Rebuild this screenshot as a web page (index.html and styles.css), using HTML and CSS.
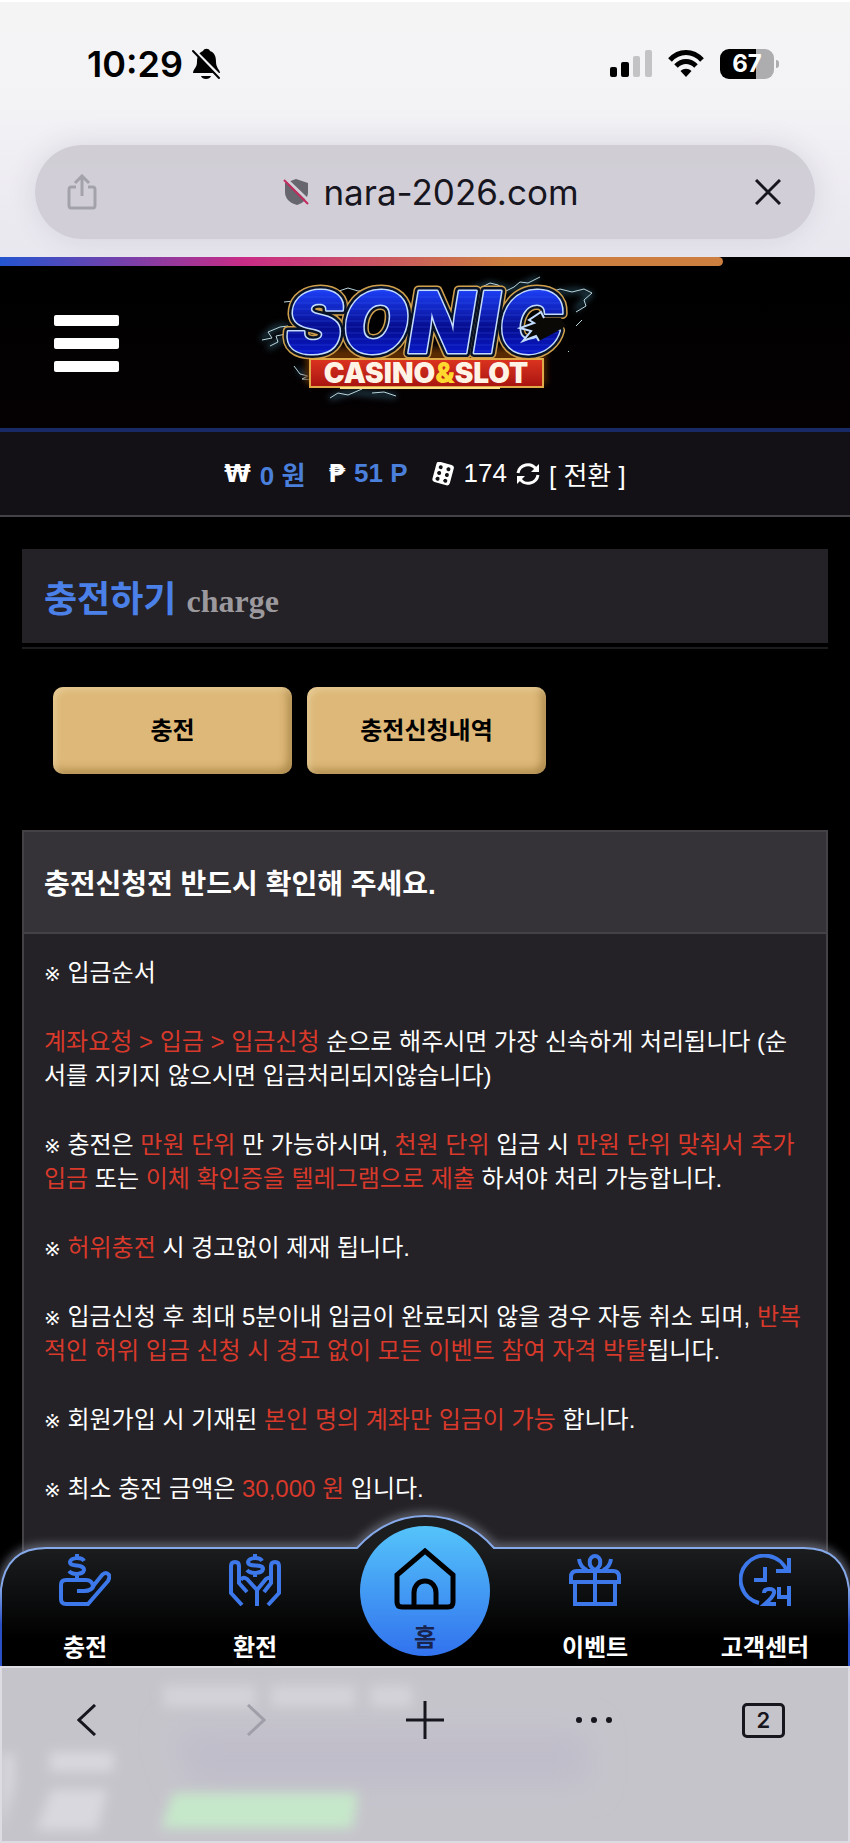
FILE: index.html
```html
<!DOCTYPE html>
<html lang="ko">
<head>
    <meta charset="UTF-8">
    <meta name="viewport" content="width=device-width, initial-scale=1.0">
    <title>충전하기</title>
    <link rel="stylesheet" href="styles.css">
</head>
<body>
    <div class="browser-top">
        <div class="status-bar">
            <div class="status-left">
                <span class="time">10:29</span>
                <svg width="30" height="32" viewBox="0 0 30 32">
                    <path d="M2 25C2 21 6 20 6 14C6 7 9 4 12 3C13 0 18 0 19 3C24 5 25 9 25 14C25 20 29 22 29 25Z"/>
                    <path d="M10 28H20C19 32 11 32 10 28Z"/>
                    <path d="M4 3L30 29" stroke="#f4f3f6" stroke-width="3"/>
                    <path d="M2 3L28 30" stroke="#000" stroke-width="2" stroke-linecap="round"/>
                </svg>
            </div>
            <div class="status-right">
                <svg width="42" height="28" viewBox="0 0 42 28">
                    <rect x="0" y="17" width="7" height="10" rx="2"/>
                    <rect x="11" y="12" width="8" height="15" rx="2"/>
                    <rect x="23" y="6" width="7" height="21" rx="2" fill="#c3c2c5"/>
                    <rect x="35" y="0" width="7" height="27" rx="2" fill="#c3c2c5"/>
                </svg>
                <svg width="36" height="27" viewBox="0 0 36 27" fill="none" stroke="#000" stroke-width="5">
                    <path d="M2 10C11 0 25 0 34 10"/>
                    <path d="M8 16C14 10 22 10 28 16"/>
                    <path d="M18 27L12.500 21C16 18 20 18 23.500 21Z" fill="#000" stroke="none"/>
                </svg>
                <div class="battery"><span>67</span></div>
            </div>
        </div>
        <div class="address-bar">
            <button class="icon-btn" aria-label="공유">
                <svg width="30" height="36" viewBox="0 0 30 36" fill="none" stroke="#a3a1aa" stroke-width="3">
                    <path d="M9 13H4Q2 13 2 16V31Q2 34 4 34H26Q28 34 28 31V16Q28 13 26 13H21M15 22V3M8 9L15 2L22 9"/>
                </svg>
            </button>
            <div class="address">
                <svg width="27" height="28" viewBox="0 0 27 28">
                    <path d="M2 5L13 1L25 5V14C25 20 21 25 14 27C6 25 2 20 2 14Z" fill="#67656e"/>
                    <path d="M3 1L27 24" stroke="#d1ced7" stroke-width="3"/>
                    <path d="M1 2L25 26" stroke="#c42a5c" stroke-width="2"/>
                </svg>
                <span>nara-2026.com</span>
            </div>
            <button class="icon-btn" aria-label="중지">
                <svg width="26" height="26" viewBox="0 0 26 26" stroke="#17151d" stroke-width="3">
                    <path d="M1 1L25 25M25 1L1 25"/>
                </svg>
            </button>
        </div>
    </div>

    <div class="site">
        <div class="progress"><div class="progress-fill"></div></div>

        <header class="header">
            <button class="menu-btn" aria-label="메뉴"><i></i><i></i><i></i></button>
            <a class="logo" href="#">
                <svg width="370" height="150" viewBox="-10 0 370 150">
                    <defs>
                        <linearGradient id="logoBlue" x1="0" y1="0" x2="0" y2="1">
                            <stop offset="0.200" stop-color="#1b3cf0"/>
                            <stop offset="0.550" stop-color="#050c8c"/>
                            <stop offset="0.900" stop-color="#0a1ee0"/>
                        </linearGradient>
                        <linearGradient id="logoRed" x1="0" y1="0" x2="0" y2="1">
                            <stop offset="0" stop-color="#dc3420"/>
                            <stop offset="1" stop-color="#a81410"/>
                        </linearGradient>
                        <filter id="soft" x="-20%" y="-20%" width="140%" height="140%"><feGaussianBlur stdDeviation="3"/></filter>
                        <pattern id="scan" width="8" height="6" patternUnits="userSpaceOnUse"><path d="M0 1H8" stroke="#3c63ff" stroke-opacity="0.300"/></pattern>
                    </defs>
                    <!-- lightning -->
                    <g fill="none" stroke="#3f7d96" stroke-opacity="0.600" stroke-width="4" filter="url(#soft)">
                        <path d="M12 74L24 62L38 60M18 82L34 72M48 104L62 112M80 132L100 126L122 128L146 130M210 28L240 18L262 24L288 12M300 28L326 24L340 28L326 44"/>
                    </g>
                    <g fill="none" stroke="#b9d6de" stroke-width="1">
                        <path d="M12 74L22 72L18 66L30 61L38 60M20 80L28 76L26 70L36 68M34 36L44 35L50 40M56 26L60 30M86 26L98 22L108 25L120 24"/>
                        <path d="M44 100L50 108L58 110L52 113L64 114M80 132L88 127L98 129L112 123M122 127L134 126L146 130"/>
                        <path d="M204 32L216 25L230 22L240 17L248 19L256 25L264 21L270 16L278 17L290 11"/>
                        <path d="M298 27L310 23L322 26L334 23L342 27L334 34L336 40L326 46M332 54L326 60M314 66L306 72M318 85L319 86"/>
                    </g>
                    <rect x="56" y="82" width="240" height="36" fill="#5a2c05" filter="url(#soft)"/>
                    <g class="logo-main">
                        <text x="36" y="87" stroke="#d0a04c" stroke-width="11">SONIC</text>
                        <text x="36" y="87" stroke="#071226" stroke-width="8">SONIC</text>
                        <text x="36" y="87" stroke="#c3dcff" stroke-width="3">SONIC</text>
                        <text x="36" y="87" fill="url(#logoBlue)">SONIC</text>
                        <text x="36" y="87" fill="url(#scan)">SONIC</text>
                    </g>
                    <!-- spikes cut out of the C -->
                    <path d="M311 52L294 52L291 46L279 54L284 57L270 62L281 65L273 75L286 70L289 75L304 67L316 60Z" fill="#0a0906"/>
                    <path d="M294 52L291 46L279 54L284 57L270 62L281 65L273 75L286 70L289 75" fill="none" stroke="#c3dcff" stroke-width="2"/>
                    <rect x="60" y="93" width="233" height="28" fill="url(#logoRed)" stroke="#e0aa48" stroke-width="2"/>
                    <path d="M90 122H250" stroke="#ffe08a" stroke-width="2"/>
                    <text class="logo-sub" x="176" y="117" text-anchor="middle">CASINO<tspan fill="#ffd92e">&amp;</tspan>SLOT</text>
                </svg>
            </a>
        </header>

        <div class="wallet">
            <span class="coin">₩</span>
            <b>0 원</b>
            <span class="coin peso">₱</span>
            <b>51 P</b>
            <svg class="dice" width="24" height="24" viewBox="0 0 24 24">
                <g transform="rotate(15 12 12)">
                    <rect x="3" y="1" width="18" height="21" rx="3" fill="#fff"/>
                    <g fill="#131115"><circle cx="8" cy="6" r="2"/><circle cx="16" cy="6" r="2"/><circle cx="8" cy="12" r="2"/><circle cx="16" cy="12" r="2"/><circle cx="8" cy="18" r="2"/><circle cx="16" cy="18" r="2"/></g>
                </g>
            </svg>
            <span>174</span>
            <svg width="24" height="24" viewBox="0 0 24 24" fill="none" stroke="#fff" stroke-width="3">
                <path d="M2 11A10 10 0 0 1 20 7M22 13A10 10 0 0 1 4 17"/>
                <path d="M23 2V10H15ZM1 22V14H9Z" fill="#fff" stroke="none"/>
            </svg>
            <a href="#">[ 전환 ]</a>
        </div>

        <main class="content">
            <h1 class="page-title">충전하기 <small>charge</small></h1>
            <div class="tabs">
                <button>충전</button>
                <button>충전신청내역</button>
            </div>
            <section class="notice">
                <h2>충전신청전 반드시 확인해 주세요.</h2>
                <div class="notice-body">
                    <p><i>※</i> 입금순서</p>
                    <p><em>계좌요청 &gt; 입금 &gt; 입금신청</em> 순으로 해주시면 가장 신속하게 처리됩니다 (순서를 지키지 않으시면 입금처리되지않습니다)</p>
                    <p><i>※</i> 충전은 <em>만원 단위</em> 만 가능하시며, <em>천원 단위</em> 입금 시 <em>만원 단위 맞춰서 추가입금</em> 또는 <em>이체 확인증을 텔레그램으로 제출</em> 하셔야 처리 가능합니다.</p>
                    <p><i>※</i> <em>허위충전</em> 시 경고없이 제재 됩니다.</p>
                    <p><i>※</i> 입금신청 후 최대 5분이내 입금이 완료되지 않을 경우 자동 취소 되며, <em>반복적인 허위 입금 신청 시 경고 없이 모든 이벤트 참여 자격 박탈</em>됩니다.</p>
                    <p><i>※</i> 회원가입 시 기재된 <em>본인 명의 계좌만 입금이 가능</em> 합니다.</p>
                    <p><i>※</i> 최소 충전 금액은 <em>30,000 원</em> 입니다.</p>
                </div>
            </section>
        </main>

        <nav class="bottom-nav">
            <svg class="nav-bg" viewBox="0 0 850 165" preserveAspectRatio="none">
                <defs>
                    <linearGradient id="navFill" x1="0" y1="0" x2="0" y2="1">
                        <stop offset="0.200" stop-color="#1b1d1f"/>
                        <stop offset="0.800" stop-color="#000"/>
                    </linearGradient>
                    <linearGradient id="navLine" x1="0" y1="0" x2="0" y2="1">
                        <stop offset="0.450" stop-color="#86a9ea"/>
                        <stop offset="0.700" stop-color="#2a4fc4"/>
                    </linearGradient>
                    <filter id="navGlow" x="-5%" y="-20%" width="110%" height="140%"><feGaussianBlur stdDeviation="5"/></filter>
                </defs>
                <path d="M1 170V88Q6 47 46 47H357Q386 15 425 15Q466 15 494 47H804Q844 47 849 88V170" fill="none" stroke="#7b8090" stroke-width="6" filter="url(#navGlow)"/>
                <path d="M1 170V88Q6 47 46 47H357Q386 15 425 15Q466 15 494 47H804Q844 47 849 88V170" fill="url(#navFill)" stroke="url(#navLine)" stroke-width="2"/>
            </svg>
            <a class="nav-item" href="#">
                <svg width="52" height="52" viewBox="0 0 52 52">
                    <path d="M25 7C23 3 12 3 11 8C11 14 25 9 25 16C24 21 13 21 10 17M18 0V4M18 20V25"/>
                    <path d="M18 37H25Q33 37 35 31L43 21Q47 17 50 21Q51 23 49 27L29 50H7Q2 50 2 45V31Q2 26 7 26H27Q33 26 34 32"/>
                </svg>
                <span>충전</span>
            </a>
            <a class="nav-item" href="#">
                <svg width="52" height="52" viewBox="0 0 52 52">
                    <path d="M33 7C31 3 20 3 19 8C19 14 34 9 34 15C33 20 21 20 18 16M26 0V4M26 19V23"/>
                    <path d="M28 52V36L18 25Q14 22 12 26M18 38L10 29V12Q10 8 6 8Q2 8 2 12V39L13 51M28 36L37 25Q41 22 42 26M35 38L42 29V12Q42 8 46 8Q50 8 50 12V39L39 51"/>
                </svg>
                <span>환전</span>
            </a>
            <a class="nav-item home" href="#">
                <svg width="62" height="62" viewBox="0 0 62 62">
                    <path d="M3 27L31 3L59 27V54Q59 59 54 59H8Q3 59 3 54ZM20 58V45C20 29 42 29 42 45V58"/>
                </svg>
                <span>홈</span>
            </a>
            <a class="nav-item" href="#">
                <svg width="52" height="52" viewBox="0 0 52 52">
                    <path d="M2 30V23Q2 17 8 17H44Q50 17 50 23V28H0M6 28V50H46V28M26 16V50M26 16C18 12 20 2 26 2C32 2 34 12 26 16M18 16Q11 13 10 5M34 16Q41 13 42 5"/>
                </svg>
                <span>이벤트</span>
            </a>
            <a class="nav-item" href="#">
                <svg width="52" height="52" viewBox="0 0 52 52">
                    <path d="M20 49A24 24 0 1 1 48 17M50 4V17H37M26 13V26H15"/>
                    <path d="M25 39Q25 35 30 35Q36 35 35 39Q34 43 26 50H37M40 33V43H50M50 32V52"/>
                </svg>
                <span>고객센터</span>
            </a>
        </nav>
    </div>

    <div class="browser-bottom">
        <svg class="haze" viewBox="0 0 850 177" preserveAspectRatio="none">
            <defs>
                <filter id="haze" x="-20%" y="-40%" width="140%" height="180%"><feGaussianBlur stdDeviation="6"/></filter>
                <filter id="hazeWide" x="-20%" y="-60%" width="140%" height="220%"><feGaussianBlur stdDeviation="16"/></filter>
            </defs>
            <path d="M170 64H590V120H190Z" fill="#c0bdca" filter="url(#hazeWide)"/>
            <g filter="url(#haze)">
                <path d="M162 18H255V40H162ZM270 18H355V40H270ZM370 18H412V40H370Z" fill="#d4d3d9"/>
                <path d="M0 88H12V120L0 165ZM48 86H112V106H48ZM50 124H106L96 166H34Z" fill="#d9d8df"/>
                <path d="M172 128H358L352 164H160Z" fill="#c6e8ca"/>
            </g>
        </svg>
        <div class="toolbar">
            <button aria-label="뒤로"><svg width="20" height="32" viewBox="0 0 20 32"><path d="M18 1L2 16L18 31"/></svg></button>
            <button class="off" aria-label="앞으로"><svg width="20" height="32" viewBox="0 0 20 32"><path d="M2 1L18 16L2 31"/></svg></button>
            <button aria-label="새 탭"><svg width="38" height="38" viewBox="0 0 38 38"><path d="M19 0V38M0 19H38"/></svg></button>
            <button aria-label="더 보기"><svg width="38" height="8" viewBox="0 0 38 8"><g fill="#17151d" stroke="none"><circle cx="4" cy="4" r="3"/><circle cx="19" cy="4" r="3"/><circle cx="34" cy="4" r="3"/></g></svg></button>
            <button aria-label="탭 2개"><span class="tab-count">2</span></button>
        </div>
    </div>
</body>
</html>
```

FILE: styles.css
```css
* {
    box-sizing: border-box;
}
body {
    margin: 0;
    min-height: 100vh;
    display: flex;
    flex-direction: column;
    background: #000;
    color: #fff;
    font-family: "Liberation Sans", "Noto Sans CJK KR", sans-serif;
    font-size: 24px;
}
button {
    border: none;
    background: none;
    padding: 0;
    font-family: inherit;
    cursor: pointer;
}
a {
    color: inherit;
    text-decoration: none;
}
svg {
    display: block;
    flex: none;
}

/* browser top */
.browser-top {
    height: 257px;
    padding: 0 35px;
    background: linear-gradient(#f5f4f5, #f3f2f5 40%, #e9e7ef);
    border-top: 2px solid #fff;
    color: #000;
    font-family: Inter, sans-serif;
}
.status-bar {
    height: 123px;
    padding: 0 36px 0 52px;
    display: flex;
    align-items: center;
    justify-content: space-between;
}
.status-left {
    display: flex;
    align-items: center;
    gap: 8px;
}
.time {
    font-size: 36px;
    font-weight: 600;
}
.status-right {
    display: flex;
    align-items: center;
    gap: 16px;
}
.battery {
    position: relative;
    width: 54px;
    height: 30px;
    margin-right: 5px;
    border-radius: 9px;
    background: linear-gradient(90deg, #000 67%, #adacae 67%);
    color: #fff;
    font-size: 24px;
    font-weight: 700;
    line-height: 30px;
    text-align: center;
}
.battery::after {
    content: "";
    position: absolute;
    right: -5px;
    top: 11px;
    width: 3px;
    height: 8px;
    border-radius: 0 4px 4px 0;
    background: #adacae;
}
.address-bar {
    height: 94px;
    margin-top: 20px;
    padding: 0 34px 0 32px;
    border-radius: 47px;
    background: linear-gradient(#d0ced3, #d1ced8 40%);
    box-shadow: 0 0 30px rgba(60, 50, 90, 0.12);
    display: flex;
    align-items: center;
    justify-content: space-between;
}
.address {
    display: flex;
    align-items: center;
    gap: 13px;
    padding-left: 10px;
    font-size: 35px;
    color: #17151d;
}

/* site */
.site {
    position: relative;
    flex: 1;
    display: flex;
    flex-direction: column;
    overflow: hidden;
}
.progress-fill {
    width: 85%;
    height: 9px;
    border-radius: 0 5px 5px 0;
    background: linear-gradient(90deg, #2355d0, #c92c86 34%, #cc7f3f 70%);
}
.header {
    height: 166px;
    padding: 0 54px;
    border-bottom: 4px solid #172a66;
    background: linear-gradient(#000, #050103);
    display: grid;
    grid-template-columns: 1fr auto 1fr;
}
.menu-btn {
    width: 65px;
    height: 57px;
    margin-top: 49px;
    display: flex;
    flex-direction: column;
    justify-content: space-between;
}
.menu-btn i {
    width: 100%;
    height: 11px;
    border-radius: 2px;
    background: #fff;
}
.logo-main {
    font: italic 900 85px Inter, sans-serif;
    stroke-linejoin: round;
}
.logo-sub {
    font: 900 28px Inter, sans-serif;
    fill: #fff3e6;
}
.wallet {
    height: 85px;
    background: #131115;
    border-bottom: 2px solid #444246;
    display: flex;
    align-items: center;
    justify-content: center;
    gap: 9px;
    font-size: 26px;
}
.wallet b {
    color: #4a7fdc;
}
.coin {
    font-family: "DejaVu Sans", sans-serif;
    font-size: 24px;
    font-weight: bold;
}
.peso,
.dice {
    margin-left: 14px;
}
.content {
    flex: 1;
    padding: 32px 22px 0;
    display: flex;
    flex-direction: column;
}
.page-title {
    position: relative;
    height: 94px;
    margin: 0 0 44px;
    padding: 0 22px;
    background: #242226;
    color: #4a80e8;
    font-size: 36px;
    line-height: 102px;
}
.page-title::after {
    content: "";
    position: absolute;
    left: 0;
    right: 0;
    bottom: -6px;
    height: 2px;
    background: #1d1c1f;
}
.page-title small {
    color: #9b999d;
    font-family: "Liberation Serif", serif;
    font-size: 32px;
}
.tabs {
    display: flex;
    gap: 15px;
    margin: 0 31px 56px;
}
.tabs button {
    width: 239px;
    height: 87px;
    padding-bottom: 4px;
    border-radius: 10px;
    background: #ddb878;
    box-shadow: inset 3px 3px 6px rgba(255, 240, 200, 0.4), inset -4px -4px 8px rgba(110, 80, 20, 0.45);
    color: #000;
    font-size: 24px;
    font-weight: bold;
}
.notice {
    flex: 1;
    border: 2px solid #444246;
    border-bottom: none;
    background: #242226;
}
.notice h2 {
    margin: 0;
    padding: 6px 20px 0;
    border-bottom: 2px solid #444246;
    background: #353337;
    font-size: 28px;
    line-height: 94px;
}
.notice-body {
    padding: 22px 20px 110px;
    line-height: 34px;
    word-break: break-all;
}
.notice-body p {
    margin: 0 0 35px;
}
.notice-body em {
    color: #d8392b;
    font-style: normal;
}
.notice-body i {
    font-family: "DejaVu Sans", sans-serif;
    font-size: 20px;
    font-style: normal;
    line-height: 20px;
}

/* bottom nav */
.bottom-nav {
    position: absolute;
    left: 0;
    right: 0;
    bottom: 0;
    height: 165px;
    display: grid;
    grid-template-columns: repeat(5, 1fr);
    justify-items: center;
    align-items: end;
}
.nav-bg {
    position: absolute;
    width: 100%;
    height: 100%;
}
.nav-item {
    position: relative;
    height: 112px;
    display: flex;
    flex-direction: column;
    align-items: center;
    justify-content: space-between;
    font-weight: bold;
    line-height: 36px;
}
.nav-item svg {
    fill: none;
    stroke: #3c78ea;
    stroke-width: 4;
}
.home {
    width: 130px;
    height: 130px;
    margin-bottom: 10px;
    padding-top: 22px;
    border-radius: 50%;
    background: linear-gradient(#55c4fa, #3172ee);
    color: #18234e;
}
.home svg {
    stroke: #000;
    stroke-width: 5;
}

/* browser bottom */
.browser-bottom {
    position: relative;
    height: 177px;
    padding-top: 28px;
    background: #c6c4cb;
    border: 2px solid #dddce2;
}
.haze {
    position: absolute;
    left: 0;
    top: 0;
    width: 100%;
    height: 100%;
}
.toolbar {
    position: relative;
    display: grid;
    grid-template-columns: repeat(5, 1fr);
    justify-items: center;
}
.toolbar button {
    height: 48px;
    display: flex;
    align-items: center;
}
.toolbar svg {
    fill: none;
    stroke: #17151d;
    stroke-width: 3;
}
.toolbar .off svg {
    stroke: #a09ea8;
}
.tab-count {
    width: 43px;
    height: 35px;
    border: 3px solid #17151d;
    border-radius: 5px;
    font: 600 22px/29px Inter, sans-serif;
    color: #17151d;
    text-align: center;
}
```
